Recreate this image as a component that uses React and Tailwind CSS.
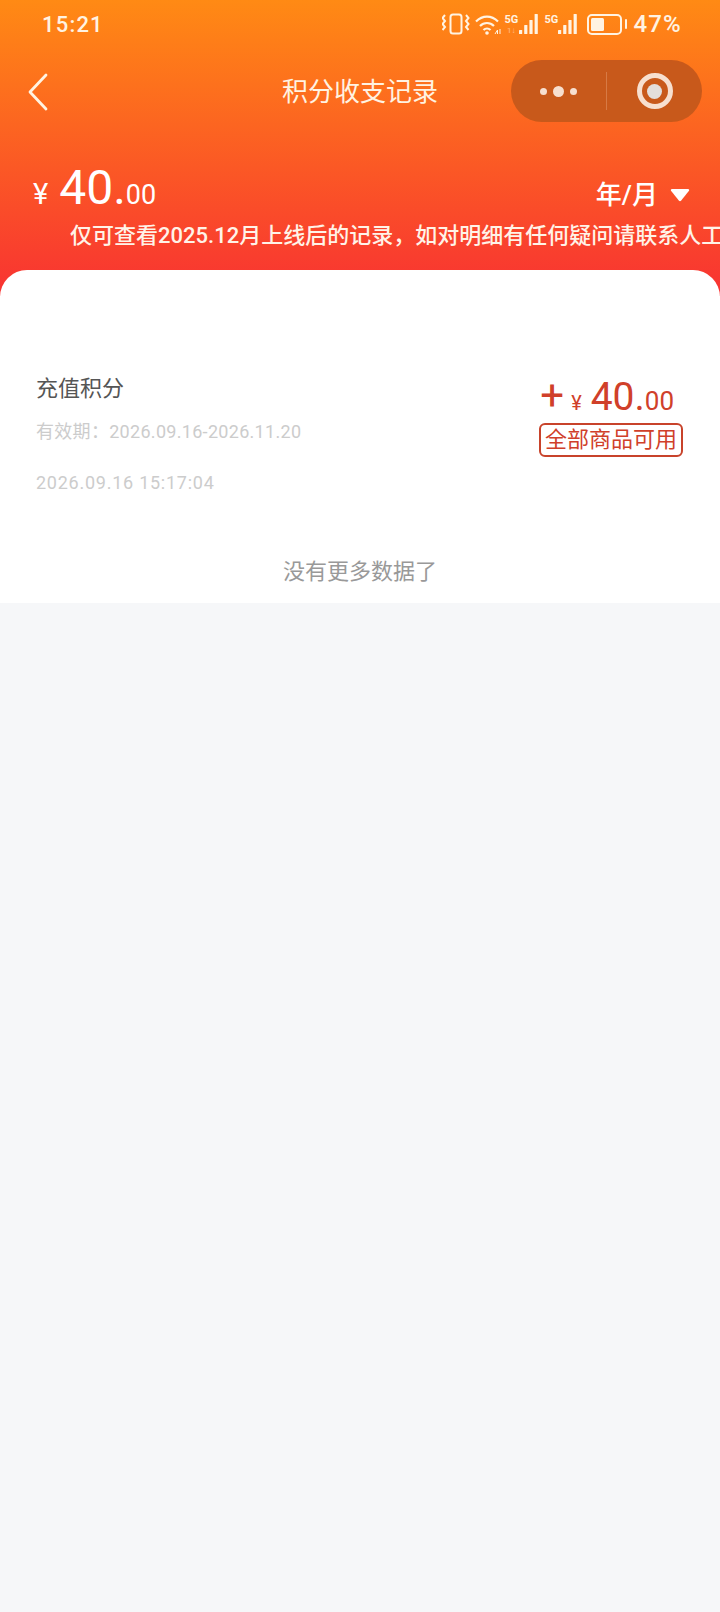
const cjk = "font-['Roboto','Noto_Sans_CJK_SC',sans-serif]"

// signal strength bars, x is the left edge of the first bar
function SignalBars({ x }) {
  const heights = [4, 9, 14, 20]
  return (
    <g fill="currentColor">
      {heights.map((h, i) => (
        <rect key={i} x={x + i * 5.2} y={34 - h} width="3.2" height={h} rx="0.6" />
      ))}
    </g>
  )
}

function StatusIcons() {
  return (
    <svg width="190" height="48" viewBox="443 0 190 48" className="text-[#fff3e2]" fill="none">
      {/* vibrate */}
      <rect x="451.5" y="14.5" width="11" height="19" rx="2.5" stroke="currentColor" strokeWidth="2" />
      <path d="M446 15l-2.5 3 2.5 3-2.5 3 2.5 3-2.5 3M467 15l2.5 3-2.5 3 2.5 3-2.5 3 2.5 3" stroke="currentColor" strokeWidth="2" />
      {/* wifi */}
      <path d="M477 21.5c6.5-6.5 15.5-6.5 22 0M481 26c4-4 10-4 14 0M484.500 30c2-2 5-2 7 0" stroke="currentColor" strokeWidth="2.2" />
      <circle cx="488" cy="33" r="1.800" fill="currentColor" />
      <path d="M496 34l2.500-4v4M501 29v5" stroke="currentColor" strokeWidth="1" />
      {/* first sim */}
      <text x="505.500" y="22.500" fontFamily="Roboto" fontWeight="700" fontSize="11" fill="currentColor">5G</text>
      <text x="508" y="33" fontFamily="Roboto" fontSize="8" fill="currentColor" opacity="0.5">1↓</text>
      <SignalBars x={520} />
      {/* second sim */}
      <text x="545.500" y="22.500" fontFamily="Roboto" fontWeight="700" fontSize="11" fill="currentColor">5G</text>
      <SignalBars x={559} />
      {/* battery */}
      <rect x="589" y="15" width="33" height="19" rx="4" stroke="currentColor" strokeWidth="2" />
      <rect x="592" y="18" width="13" height="13" rx="1.500" fill="currentColor" />
      <rect x="626" y="19" width="2" height="10" rx="1" fill="currentColor" />
    </svg>
  )
}

function BackArrow() {
  return (
    <svg width="22" height="38" viewBox="0 0 22 38" fill="none" className="mt-[2px]">
      <path d="M19 2L3 19l16 17" stroke="#fff3e2" strokeWidth="2.800" strokeLinecap="round" strokeLinejoin="round" />
    </svg>
  )
}

function CaretDown() {
  return (
    <svg width="20" height="14" viewBox="0 0 20 14">
      <path d="M2 1h16c1 0 1.500 1 1 1.800l-8 10c-.5.600-1.500.600-2 0l-8-10C.5 2 1 1 2 1z" fill="#ffffff" />
    </svg>
  )
}

function Capsule() {
  return (
    <div className="flex h-[62px] w-[191px] items-center rounded-full bg-[#c8591b]">
      <div className="flex w-[95px] items-center justify-center gap-[6px]">
        <span className="h-[7px] w-[7px] rounded-full bg-[#f7dfcf]" />
        <span className="h-[11px] w-[11px] rounded-full bg-[#f7dfcf]" />
        <span className="h-[7px] w-[7px] rounded-full bg-[#f7dfcf]" />
      </div>
      <div className="h-[38px] w-px bg-[#d77a45]" />
      <div className="flex flex-1 items-center justify-center">
        <div className="flex h-[36px] w-[36px] items-center justify-center rounded-full border-[5px] border-[#f7dfcf]">
          <span className="h-[15px] w-[15px] rounded-full bg-[#e3dedb]" />
        </div>
      </div>
    </div>
  )
}

export default function App() {
  return (
    <div className={`flex min-h-[1612px] flex-col bg-[#f6f7f9] ${cjk}`}>
      <header className="h-[296px] bg-[linear-gradient(#ff8a14,#f83232)] text-white">
        {/* system status bar */}
        <div className="flex h-[48px] items-center justify-between pl-[42px] pr-[38px]">
          <span className="text-[22px] font-medium tracking-[1.200px] text-[#fff3e2]">15:21</span>
          <div className="flex items-center gap-[1px]">
            <StatusIcons />
            <span className="text-[24px] font-medium tracking-[1.200px] text-[#fff3e2]">47%</span>
          </div>
        </div>

        {/* nav bar */}
        <div className="relative mt-[12px] flex h-[62px] items-center justify-between pl-[27px] pr-[18px]">
          <BackArrow />
          <h1 className="absolute inset-x-0 top-[1px] text-center text-[26px] font-normal leading-[62px] text-[#fff3e2]">积分收支记录</h1>
          <div className="relative">
            <Capsule />
          </div>
        </div>

        {/* balance + date filter */}
        <div className="mt-[33px] flex h-[60px] items-end justify-between pl-[33px] pr-[30px]">
          <div className="flex items-baseline pb-[3px] font-[450] leading-none">
            <span className="text-[29px] font-normal">¥</span>
            <span className="ml-[11px] text-[48px]">40.</span>
            <span className="text-[27px] font-normal">00</span>
          </div>
          <button className="flex items-center gap-[12px] pb-[2px] text-[26px] font-medium leading-[36px]">
            年/月
            <CaretDown />
          </button>
        </div>

        {/* scrolling notice */}
        <div className="mt-[6px] overflow-hidden whitespace-nowrap pl-[70px] text-[22px] font-medium leading-[30px] text-[#fff3e8]">
          仅可查看2025.12月上线后的记录，如对明细有任何疑问请联系人工
        </div>
      </header>

      <main className="relative mt-[-26px] h-[333px] rounded-t-[27px] bg-white">
        <div className="flex justify-between pl-[36px] pr-[37px] pt-[96px]">
          <div>
            <div className="text-[22px] leading-[46px] text-[#555555]">充值积分</div>
            <div className="mt-[-1px] text-[18px] leading-[42px] tracking-[0.300px] text-[#cccccc]">有效期：2026.09.16-2026.11.20</div>
            <div className="mt-[9px] text-[18px] leading-[42px] tracking-[0.750px] text-[#cccccc]">2026.09.16 15:17:04</div>
          </div>
          <div className="flex flex-col items-end text-[#d0402a]">
            <div className="mt-[8px] flex items-baseline pr-[9px] leading-[44px]">
              <span className="text-[42px] font-normal">+</span>
              <span className="ml-[7px] text-[20px]">¥</span>
              <span className="ml-[9px] text-[39px]">40.</span>
              <span className="text-[26px]">00</span>
            </div>
            <div className="mt-[-2px] rounded-[6px] border-2 border-[#c8432b] px-[4px] text-[22px] leading-[30px]">
              全部商品可用
            </div>
          </div>
        </div>
        <p className="mt-[52px] text-center text-[22px] leading-[32px] text-[#999999]">没有更多数据了</p>
      </main>
    </div>
  )
}
